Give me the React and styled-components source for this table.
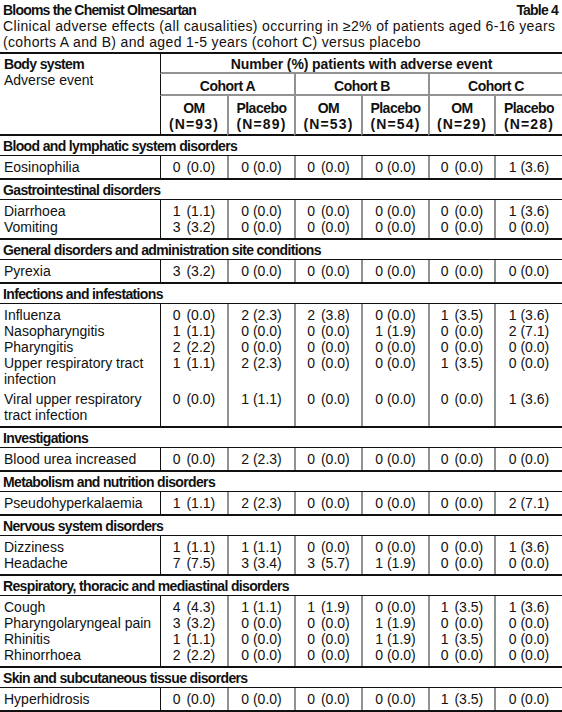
import React from 'react';
import styled, { createGlobalStyle } from 'styled-components';

const GlobalStyle = createGlobalStyle`
  body {
    margin: 0;
    background: #fff;
  }
`;

const INK = '#111';
const RULE = '#929292';

const Page = styled.div`
  width: 562px;
  padding-top: 2px;
  color: ${INK};
  font-family: "Liberation Sans", Arial, sans-serif;
  font-size: 14px;
  line-height: 16px;
`;

const TitleRow = styled.div`
  display: flex;
  justify-content: space-between;
  padding: 0 4px 0 3px;
  font-weight: bold;
  letter-spacing: -0.8px;
`;

const Subtitle = styled.div`
  padding: 0 3px;
  margin-bottom: 2px;
  letter-spacing: 0.35px;
`;

const Table = styled.table`
  width: 562px;
  table-layout: fixed;
  border-collapse: separate;
  border-spacing: 0;
  border-top: 2px solid ${INK};
  border-bottom: 2px solid ${INK};
`;

const Col = styled.col`
  width: ${(p) => p.$w}px;
`;

const LabelHead = styled.th`
  text-align: left;
  vertical-align: top;
  font-weight: normal;
  padding: 2px 4px 0;
  border-bottom: 2px solid ${INK};
`;

const Strong = styled.div`
  font-weight: bold;
  letter-spacing: -0.65px;
`;

const GroupHead = styled.th`
  text-align: center;
  font-weight: bold;
  letter-spacing: ${(p) => p.$spacing}px;
  padding: ${(p) => p.$pad};
  border-left: ${(p) => (p.$first ? `1px solid ${INK}` : `2px solid ${RULE}`)};
  border-bottom: 2px solid ${RULE};
`;

const ArmHead = styled.th`
  text-align: center;
  font-weight: bold;
  letter-spacing: -0.5px;
  padding: 4px 0 2px;
  border-left: ${(p) => (p.$first ? `1px solid ${INK}` : `2px solid ${RULE}`)};
  border-bottom: 2px solid ${INK};
`;

const Count = styled.span`
  letter-spacing: 1.1px;
`;

const SectionCell = styled.td`
  font-weight: bold;
  letter-spacing: -0.65px;
  padding: 2px 3px 1px;
  border-top: ${(p) => (p.$afterHead ? 'none' : `2px solid ${INK}`)};
  border-bottom: 1px solid ${INK};
`;

const EventCell = styled.td`
  vertical-align: top;
  padding: ${(p) => p.$pt}px 4px ${(p) => p.$pb}px;
`;

const ValueCell = styled.td`
  vertical-align: top;
  text-align: center;
  white-space: nowrap;
  padding: ${(p) => p.$pt}px 0 ${(p) => p.$pb}px;
  border-left: ${(p) => (p.$first ? `1px solid ${INK}` : `2px solid ${RULE}`)};
`;

const Pct = styled.span`
  margin-left: ${(p) => (p.$wide ? 2 : 0)}px;
`;

const columns = [160, 67, 67, 67, 67, 66, 68];

const cohorts = [
  { name: 'Cohort A', arms: [['OM', '93'], ['Placebo', '89']] },
  { name: 'Cohort B', arms: [['OM', '53'], ['Placebo', '54']] },
  { name: 'Cohort C', arms: [['OM', '29'], ['Placebo', '28']] },
];

const Z = '0 (0.0)';

const sections = [
  {
    title: 'Blood and lymphatic system disorders',
    rows: [{ event: 'Eosinophilia', values: [Z, Z, Z, Z, Z, '1 (3.6)'] }],
  },
  {
    title: 'Gastrointestinal disorders',
    rows: [
      { event: 'Diarrhoea', values: ['1 (1.1)', Z, Z, Z, Z, '1 (3.6)'] },
      { event: 'Vomiting', values: ['3 (3.2)', Z, Z, Z, Z, Z] },
    ],
  },
  {
    title: 'General disorders and administration site conditions',
    rows: [{ event: 'Pyrexia', values: ['3 (3.2)', Z, Z, Z, Z, Z] }],
  },
  {
    title: 'Infections and infestations',
    rows: [
      { event: 'Influenza', values: [Z, '2 (2.3)', '2 (3.8)', Z, '1 (3.5)', '1 (3.6)'] },
      { event: 'Nasopharyngitis', values: ['1 (1.1)', Z, Z, '1 (1.9)', Z, '2 (7.1)'] },
      { event: 'Pharyngitis', values: ['2 (2.2)', Z, Z, Z, Z, Z] },
      { event: 'Upper respiratory tract infection', values: ['1 (1.1)', '2 (2.3)', Z, Z, '1 (3.5)', Z] },
      { event: 'Viral upper respiratory tract infection', values: [Z, '1 (1.1)', Z, Z, Z, '1 (3.6)'], gap: 4 },
    ],
  },
  {
    title: 'Investigations',
    rows: [{ event: 'Blood urea increased', values: [Z, '2 (2.3)', Z, Z, Z, Z] }],
  },
  {
    title: 'Metabolism and nutrition disorders',
    rows: [{ event: 'Pseudohyperkalaemia', values: ['1 (1.1)', '2 (2.3)', Z, Z, Z, '2 (7.1)'] }],
  },
  {
    title: 'Nervous system disorders',
    rows: [
      { event: 'Dizziness', values: ['1 (1.1)', '1 (1.1)', Z, Z, Z, '1 (3.6)'] },
      { event: 'Headache', values: ['7 (7.5)', '3 (3.4)', '3 (5.7)', '1 (1.9)', Z, Z] },
    ],
  },
  {
    title: 'Respiratory, thoracic and mediastinal disorders',
    rows: [
      { event: 'Cough', values: ['4 (4.3)', '1 (1.1)', '1 (1.9)', Z, '1 (3.5)', '1 (3.6)'] },
      { event: 'Pharyngolaryngeal pain', values: ['3 (3.2)', Z, Z, '1 (1.9)', Z, Z] },
      { event: 'Rhinitis', values: ['1 (1.1)', Z, Z, '1 (1.9)', '1 (3.5)', Z] },
      { event: 'Rhinorrhoea', values: ['2 (2.2)', Z, Z, Z, Z, Z] },
    ],
  },
  {
    title: 'Skin and subcutaneous tissue disorders',
    rows: [{ event: 'Hyperhidrosis', values: [Z, Z, Z, Z, '1 (3.5)', Z] }],
  },
];

const Value = ({ text, wide }) => {
  const [n, pct] = text.split(' ');
  return (
    <>
      {n} <Pct $wide={wide}>{pct}</Pct>
    </>
  );
};

const Section = ({ title, rows, afterHead }) => (
  <>
    <tr>
      <SectionCell colSpan={7} $afterHead={afterHead}>{title}</SectionCell>
    </tr>
    {rows.map((row, i) => {
      const pt = (i === 0 ? 3 : 0) + (row.gap || 0);
      const pb = i === rows.length - 1 ? 3 : 0;
      return (
        <tr key={row.event}>
          <EventCell $pt={pt} $pb={pb}>{row.event}</EventCell>
          {row.values.map((v, j) => (
            <ValueCell key={j} $pt={pt} $pb={pb} $first={j === 0}>
              <Value text={v} wide={j % 2 === 0} />
            </ValueCell>
          ))}
        </tr>
      );
    })}
  </>
);

const App = () => {
  return (
    <Page>
      <GlobalStyle />
      <TitleRow>
        <span>Blooms the Chemist Olmesartan</span>
        <span>Table 4</span>
      </TitleRow>
      <Subtitle>
        Clinical adverse effects (all causalities) occurring in ≥2% of patients aged 6-16 years
        <br />
        (cohorts A and B) and aged 1-5 years (cohort C) versus placebo
      </Subtitle>
      <Table>
        <colgroup>
          {columns.map((w, i) => (
            <Col key={i} $w={w} />
          ))}
        </colgroup>
        <thead>
          <tr>
            <LabelHead rowSpan={3}>
              <Strong>Body system</Strong>
              Adverse event
            </LabelHead>
            <GroupHead colSpan={6} $first $pad="2px 0 0" $spacing={-0.1}>
              Number (%) patients with adverse event
            </GroupHead>
          </tr>
          <tr>
            {cohorts.map((c, i) => (
              <GroupHead key={c.name} colSpan={2} $first={i === 0} $pad="4px 0 0" $spacing={-0.5}>
                {c.name}
              </GroupHead>
            ))}
          </tr>
          <tr>
            {cohorts.map((c, i) =>
              c.arms.map(([arm, n], j) => (
                <ArmHead key={`${c.name}-${arm}`} $first={i === 0 && j === 0}>
                  {arm}
                  <br />
                  <Count>(N={n})</Count>
                </ArmHead>
              ))
            )}
          </tr>
        </thead>
        <tbody>
          {sections.map((s, i) => (
            <Section key={s.title} {...s} afterHead={i === 0} />
          ))}
        </tbody>
      </Table>
    </Page>
  );
};

export default App;
